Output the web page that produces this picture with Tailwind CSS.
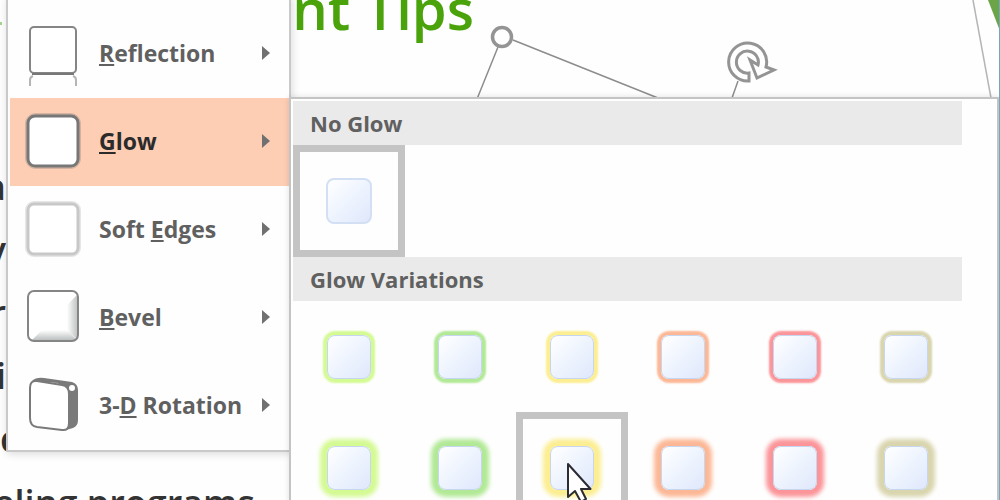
<!DOCTYPE html>
<html lang="en">
<head>
  <meta charset="UTF-8" />
  <meta name="viewport" content="width=device-width, initial-scale=1.0"/>
  <title>Shape Effects</title>
  <script src="https://cdn.jsdelivr.net/npm/@tailwindcss/browser@4"></script>
</head>
<body class="bg-[#fefefe] font-['Open_Sans',sans-serif] text-[#606060]">
  <main class="relative h-screen w-full overflow-hidden">

    <!-- Slide behind the menus -->
    <section aria-label="Slide">
      <span class="absolute left-0 top-[22px] h-[3px] w-[2px] bg-[#a5d58a]"></span>
      <h1 class="absolute right-[526px] -top-7 whitespace-nowrap text-[56px] leading-[72px] font-semibold text-[#4ba30b]">ent Tips</h1>
      <div class="absolute left-0 top-[155px] flex w-[6px] flex-col items-end text-[36px] leading-[63px] font-semibold text-[#333]">
        <p>a</p>
        <p>y</p>
        <p>r</p>
        <p>i</p>
        <p class="self-start">c</p>
      </div>
      <p class="absolute right-[745px] top-[471px] whitespace-nowrap text-[36px] leading-[63px] font-semibold text-[#333]">eling programs</p>
      <svg class="absolute right-0 top-0" width="540" height="100" viewBox="460 0 540 100" fill="none">
        <path d="M498 47L477 99M513 40L658 98M738 81L732 98" stroke="#8d8d8d" stroke-width="1.5"/>
        <circle cx="502" cy="37" r="9.5" stroke="#949494" stroke-width="3.5" fill="#fff"/>
        <path d="M973 0L991 98" stroke="#b5b5b5" stroke-width="1.5"/>
        <path d="M988 0H1000V31Z" fill="#6ba548"/>
        <path d="M749 73V81A19 19 0 1 1 766 67L774 70L757 78L750 60L758 65A11 11 0 1 0 749 73Z" stroke="#949494" stroke-width="3" fill="#fff"/>
      </svg>
    </section>

    <!-- Shape effects menu -->
    <nav class="absolute left-[6px] -top-1 w-[285px] border-2 border-[#c9c9c9] bg-[#fefefe] pt-3 pl-0.5 shadow-[1px_2px_8px_rgba(0,0,0,0.14)]">
      <ul class="text-[23px] font-bold">
        <li>
          <button class="flex h-22 w-full items-center pb-0.5 pl-3.5 pr-[18px] text-left">
            <svg class="shrink-0" width="60" height="86" viewBox="0 1 60 86" fill="none">
              <rect x="6" y="18" width="46" height="46" rx="4" stroke="#858585" stroke-width="2" fill="#fff"/>
              <path d="M8 65H50" stroke="#777" stroke-width="2"/>
              <path d="M6 77V71Q6 68 9 67M52 77V71Q52 68 49 67" stroke="#b5b5b5" stroke-width="2"/>
            </svg>
            <span class="ml-[15px] flex-1"><u>R</u>eflection</span>
            <svg width="10" height="14" viewBox="0 0 10 14" fill="#707070"><path d="M1 0L9 7L1 14Z"/></svg>
          </button>
        </li>
        <li>
          <button class="flex h-22 w-full items-center bg-[#fdcdb4] pb-0.5 pl-3.5 pr-[18px] text-left text-[#2b2b2b]">
            <svg class="shrink-0" width="60" height="86" viewBox="0 1 60 86" fill="none">
              <rect x="4" y="19" width="50" height="50" rx="8" stroke="#777" stroke-opacity="0.3" stroke-width="6"/>
              <rect x="4" y="19" width="50" height="50" rx="7" stroke="#777" stroke-width="3" fill="#fff"/>
            </svg>
            <span class="ml-[15px] flex-1"><u>G</u>low</span>
            <svg width="10" height="14" viewBox="0 0 10 14" fill="#707070"><path d="M1 0L9 7L1 14Z"/></svg>
          </button>
        </li>
        <li>
          <button class="flex h-22 w-full items-center pb-0.5 pl-3.5 pr-[18px] text-left">
            <svg class="shrink-0" width="60" height="86" viewBox="0 1 60 86" fill="none">
              <rect x="4" y="19" width="50" height="50" rx="6" stroke="#e6e6e6" stroke-width="6"/>
              <rect x="4" y="19" width="50" height="50" rx="6" stroke="#c8c8c8" stroke-width="3" fill="#fff"/>
            </svg>
            <span class="ml-[15px] flex-1">Soft <u>E</u>dges</span>
            <svg width="10" height="14" viewBox="0 0 10 14" fill="#707070"><path d="M1 0L9 7L1 14Z"/></svg>
          </button>
        </li>
        <li>
          <button class="flex h-22 w-full items-center pb-0.5 pl-3.5 pr-[18px] text-left">
            <svg class="shrink-0" width="60" height="86" viewBox="0 1 60 86" fill="none">
              <defs>
                <linearGradient id="bevelRight" x1="0" x2="1" y1="0" y2="0"><stop offset="0" stop-color="#fff"/><stop offset="1" stop-color="#c2c5c5"/></linearGradient>
                <linearGradient id="bevelBottom" x1="0" x2="0" y1="0" y2="1"><stop offset="0" stop-color="#fff"/><stop offset="1" stop-color="#bcc0c0"/></linearGradient>
              </defs>
              <rect x="4" y="18" width="50" height="50" rx="6" fill="#fff"/>
              <path d="M53 22V66L43 58V32Z" fill="url(#bevelRight)"/>
              <path d="M8 67H53L43 57H18Z" fill="url(#bevelBottom)"/>
              <rect x="4" y="18" width="50" height="50" rx="6" stroke="#858585" stroke-width="2"/>
            </svg>
            <span class="ml-[15px] flex-1"><u>B</u>evel</span>
            <svg width="10" height="14" viewBox="0 0 10 14" fill="#707070"><path d="M1 0L9 7L1 14Z"/></svg>
          </button>
        </li>
        <li>
          <button class="flex h-22 w-full items-center pb-0.5 pl-3.5 pr-[18px] text-left">
            <svg class="shrink-0" width="60" height="86" viewBox="0 1 60 86" fill="none">
              <path d="M8 20Q12 16 20 17L48 21Q54 23 54 29V59Q54 65 49 67L42 69L34 22Z" fill="#7a7a7a"/>
              <path d="M13 20L38 24Q45 25 45 33V62Q45 70 38 69L13 66Q6 65 6 57V27Q6 19 13 20Z" fill="#fff" stroke="#7a7a7a" stroke-width="2"/>
              <circle cx="48" cy="27" r="3" fill="#fff"/>
            </svg>
            <span class="ml-[15px] flex-1 whitespace-nowrap">3-<u>D</u> Rotation</span>
            <svg width="10" height="14" viewBox="0 0 10 14" fill="#707070"><path d="M1 0L9 7L1 14Z"/></svg>
          </button>
        </li>
      </ul>
    </nav>

    <!-- Glow gallery -->
    <section aria-label="Glow" class="absolute left-[289px] right-px top-[97px] border-2 border-[#c4c4c4] bg-[#fefefe] pt-0.5 pl-0.5 pr-[35px] shadow-[0_0_6px_rgba(0,0,0,0.12)]">
      <h2 class="h-11 bg-[#eaeaea] pl-[17px] text-[22px] leading-[44px] font-bold">No Glow</h2>
      <div class="grid grid-cols-6">
        <button aria-label="No Glow" class="flex h-28 items-center justify-center border-[7px] border-[#c4c4c4]">
          <span class="size-[46px] rounded-lg border-2 border-[#d3e0f4] bg-linear-to-br from-white via-[#eef4fe] to-[#dfe7fb]"></span>
        </button>
      </div>
      <h2 class="h-11 bg-[#eaeaea] pl-[17px] text-[22px] leading-[44px] font-bold">Glow Variations</h2>
      <div class="grid grid-cols-6">
        <button aria-label="Lime, 5 pt" class="flex h-[111px] items-center justify-center">
          <span class="size-11 rounded-lg border border-[#c6d6ee] bg-linear-to-br from-white via-[#eef4fe] to-[#dfe7fb] shadow-[0_0_2px_4px_#d4fa92]"></span>
        </button>
        <button aria-label="Green, 5 pt" class="flex h-[111px] items-center justify-center">
          <span class="size-11 rounded-lg border border-[#c6d6ee] bg-linear-to-br from-white via-[#eef4fe] to-[#dfe7fb] shadow-[0_0_2px_4px_#b2e996]"></span>
        </button>
        <button aria-label="Yellow, 5 pt" class="flex h-[111px] items-center justify-center">
          <span class="size-11 rounded-lg border border-[#c6d6ee] bg-linear-to-br from-white via-[#eef4fe] to-[#dfe7fb] shadow-[0_0_2px_4px_#fcee91]"></span>
        </button>
        <button aria-label="Orange, 5 pt" class="flex h-[111px] items-center justify-center">
          <span class="size-11 rounded-lg border border-[#c6d6ee] bg-linear-to-br from-white via-[#eef4fe] to-[#dfe7fb] shadow-[0_0_2px_4px_#fcb896]"></span>
        </button>
        <button aria-label="Red, 5 pt" class="flex h-[111px] items-center justify-center">
          <span class="size-11 rounded-lg border border-[#c6d6ee] bg-linear-to-br from-white via-[#eef4fe] to-[#dfe7fb] shadow-[0_0_2px_4px_#fb9599]"></span>
        </button>
        <button aria-label="Tan, 5 pt" class="flex h-[111px] items-center justify-center">
          <span class="size-11 rounded-lg border border-[#c6d6ee] bg-linear-to-br from-white via-[#eef4fe] to-[#dfe7fb] shadow-[0_0_2px_4px_#d9d5ae]"></span>
        </button>
        <button aria-label="Lime, 8 pt" class="flex h-[111px] items-center justify-center">
          <span class="size-11 rounded-lg border border-[#c6d6ee] bg-linear-to-br from-white via-[#eef4fe] to-[#dfe7fb] shadow-[0_0_4px_7px_#d4fa92]"></span>
        </button>
        <button aria-label="Green, 8 pt" class="flex h-[111px] items-center justify-center">
          <span class="size-11 rounded-lg border border-[#c6d6ee] bg-linear-to-br from-white via-[#eef4fe] to-[#dfe7fb] shadow-[0_0_4px_7px_#b2e996]"></span>
        </button>
        <button aria-label="Yellow, 8 pt" class="relative flex h-[111px] items-center justify-center border-[7px] border-[#c4c4c4]">
          <span class="size-11 rounded-lg border border-[#c6d6ee] bg-linear-to-br from-white via-[#eef4fe] to-[#dfe7fb] shadow-[0_0_4px_7px_#fcee91]"></span>
          <!-- mouse pointer -->
          <svg class="absolute left-[43px] top-[43px]" width="28" height="42" viewBox="0 0 28 42">
            <path d="M2 2V35L9 29L15 40L20 37L15 27H24.5Z" fill="#fff" stroke="#2b2b33" stroke-width="2" stroke-linejoin="round"/>
          </svg>
        </button>
        <button aria-label="Orange, 8 pt" class="flex h-[111px] items-center justify-center">
          <span class="size-11 rounded-lg border border-[#c6d6ee] bg-linear-to-br from-white via-[#eef4fe] to-[#dfe7fb] shadow-[0_0_4px_7px_#fcb896]"></span>
        </button>
        <button aria-label="Red, 8 pt" class="flex h-[111px] items-center justify-center">
          <span class="size-11 rounded-lg border border-[#c6d6ee] bg-linear-to-br from-white via-[#eef4fe] to-[#dfe7fb] shadow-[0_0_4px_7px_#fb9599]"></span>
        </button>
        <button aria-label="Tan, 8 pt" class="flex h-[111px] items-center justify-center">
          <span class="size-11 rounded-lg border border-[#c6d6ee] bg-linear-to-br from-white via-[#eef4fe] to-[#dfe7fb] shadow-[0_0_4px_7px_#d9d5ae]"></span>
        </button>
      </div>
    </section>
    <div class="absolute inset-y-0 right-0 w-px bg-[#6fa9bd]"></div>
  </main>
</body>
</html>
